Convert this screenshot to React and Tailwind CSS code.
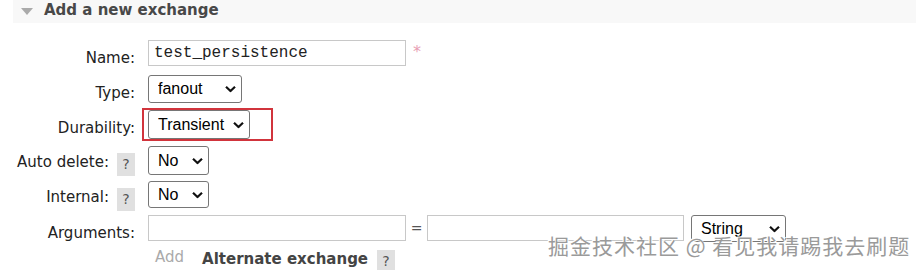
import React from 'react';

const label = "font-['DejaVu_Sans',sans-serif] text-[15px] text-[#222]";
const ctl = "font-['Liberation_Sans',Arial,sans-serif] text-[16px] text-black";

const Help = () => (
  <span className="inline-flex w-[18px] h-[23px] items-center justify-center bg-[#e0e0e0] text-[#555] text-[14px] font-['DejaVu_Sans',sans-serif]">
    ?
  </span>
);

const Chevron = () => (
  <svg className="pointer-events-none absolute right-[6px] top-1/2 -translate-y-1/2" width="11" height="7" viewBox="0 0 11 7">
    <path d="M1 1.2 L5.5 5.5 L10 1.2" fill="none" stroke="#111" strokeWidth="2.2" />
  </svg>
);

const Select = ({ value, width, height = 'h-[28px]' }) => (
  <div className={`relative ${width} ${height}`}>
    <select
      defaultValue={value}
      className={`${ctl} appearance-none w-full h-full border border-[#767676] rounded-[3px] bg-white pl-[9px] outline-none`}
    >
      <option>{value}</option>
    </select>
    <Chevron />
  </div>
);

// fixed row heights so the label never pushes the next row down
const Row = ({ children, labelEl, className = '' }) => (
  <div className={`flex ${className}`}>
    <div className="w-[135px] flex justify-end items-start">{labelEl}</div>
    <div className="ml-[13px] flex items-start">{children}</div>
  </div>
);

const TextLabel = ({ text, pt = 'pt-[8px]' }) => <span className={`${label} ${pt} leading-[18px]`}>{text}</span>;

const HelpLabel = ({ text }) => (
  <div className="flex items-start gap-[8px]">
    <span className={`${label} pt-[7px] leading-[18px]`}>{text}</span>
    <div className="pt-[5px]"><Help /></div>
  </div>
);

export default function App() {
  return (
    <div className="relative w-[916px] h-[270px] bg-white overflow-hidden">
      <div className="ml-[13px] h-[23px] bg-[#f8f8f8] flex items-center">
        <svg className="ml-[8px]" width="12" height="7" viewBox="0 0 12 7">
          <path d="M0 0 L12 0 L6 7 Z" fill="#aaa" />
        </svg>
        <span className="ml-[11px] font-['DejaVu_Sans',sans-serif] font-bold text-[15px] text-[#484848] leading-none -mt-[2px]">
          Add a new exchange
        </span>
      </div>

      <div className="pt-[17px] flex flex-col">
        <Row className="h-[26px]" labelEl={<TextLabel text="Name:" pt="pt-[9px]" />}>
          <input
            defaultValue="test_persistence"
            className="w-[258px] h-[26px] border border-[#c8c8c8] pl-[5px] font-['Liberation_Mono','Courier_New',monospace] text-[16px] text-[#222] outline-none"
          />
          <span className="ml-[7px] mt-[3px] text-[#e8a0b4] text-[16px] leading-[18px] font-['DejaVu_Sans',sans-serif]">*</span>
        </Row>

        <Row className="h-[28px] mt-[9px]" labelEl={<TextLabel text="Type:" pt="pt-[9px]" />}>
          <Select value="fanout" width="w-[94px]" />
        </Row>

        <Row className="h-[29px] mt-[7px]" labelEl={<TextLabel text="Durability:" pt="pt-[9px]" />}>
          <div className="relative">
            <Select value="Transient" width="w-[102px]" height="h-[29px]" />
            <span className="pointer-events-none absolute -left-[6px] -top-[2px] w-[131px] h-[33px] border-2 border-[#d1343c]" />
          </div>
        </Row>

        <Row className="h-[29px] mt-[7px]" labelEl={<HelpLabel text="Auto delete:" />}>
          <Select value="No" width="w-[61px]" height="h-[29px]" />
        </Row>

        <Row className="h-[27px] mt-[6px]" labelEl={<HelpLabel text="Internal:" />}>
          <Select value="No" width="w-[61px]" height="h-[27px]" />
        </Row>

        <Row className="h-[26px] mt-[7px]" labelEl={<TextLabel text="Arguments:" pt="pt-[9px]" />}>
          <input className="w-[258px] h-[26px] border border-[#c8c8c8] outline-none" />
          <span className="w-[21px] text-center pt-[3px] text-[#555] text-[14px] font-['DejaVu_Sans',sans-serif]">=</span>
          <input className="w-[257px] h-[26px] border border-[#c8c8c8] outline-none" />
          <div className="ml-[7px]">
            <Select value="String" width="w-[95px]" height="h-[27px]" />
          </div>
        </Row>

        <div className="flex items-start mt-[7px] ml-[155px]">
          <span className={`${label} text-[#aaa] leading-[18px]`}>Add</span>
          <span className="ml-[18px] pt-[2px] font-['DejaVu_Sans',sans-serif] font-bold text-[15px] text-[#444] leading-[18px]">
            Alternate exchange
          </span>
          <div className="ml-[9px]"><Help /></div>
        </div>
      </div>

      <div className="absolute left-[548px] top-[232px] font-['Noto_Sans_CJK_SC',sans-serif] text-[21px] leading-[26px] tracking-[1px] text-[#9a9a9a] whitespace-nowrap [text-shadow:0_0_1px_#fff,1px_1px_0_#fff,-1px_-1px_0_#fff]">
        掘金技术社区 @ 看见我请踢我去刷题
      </div>
    </div>
  );
}
